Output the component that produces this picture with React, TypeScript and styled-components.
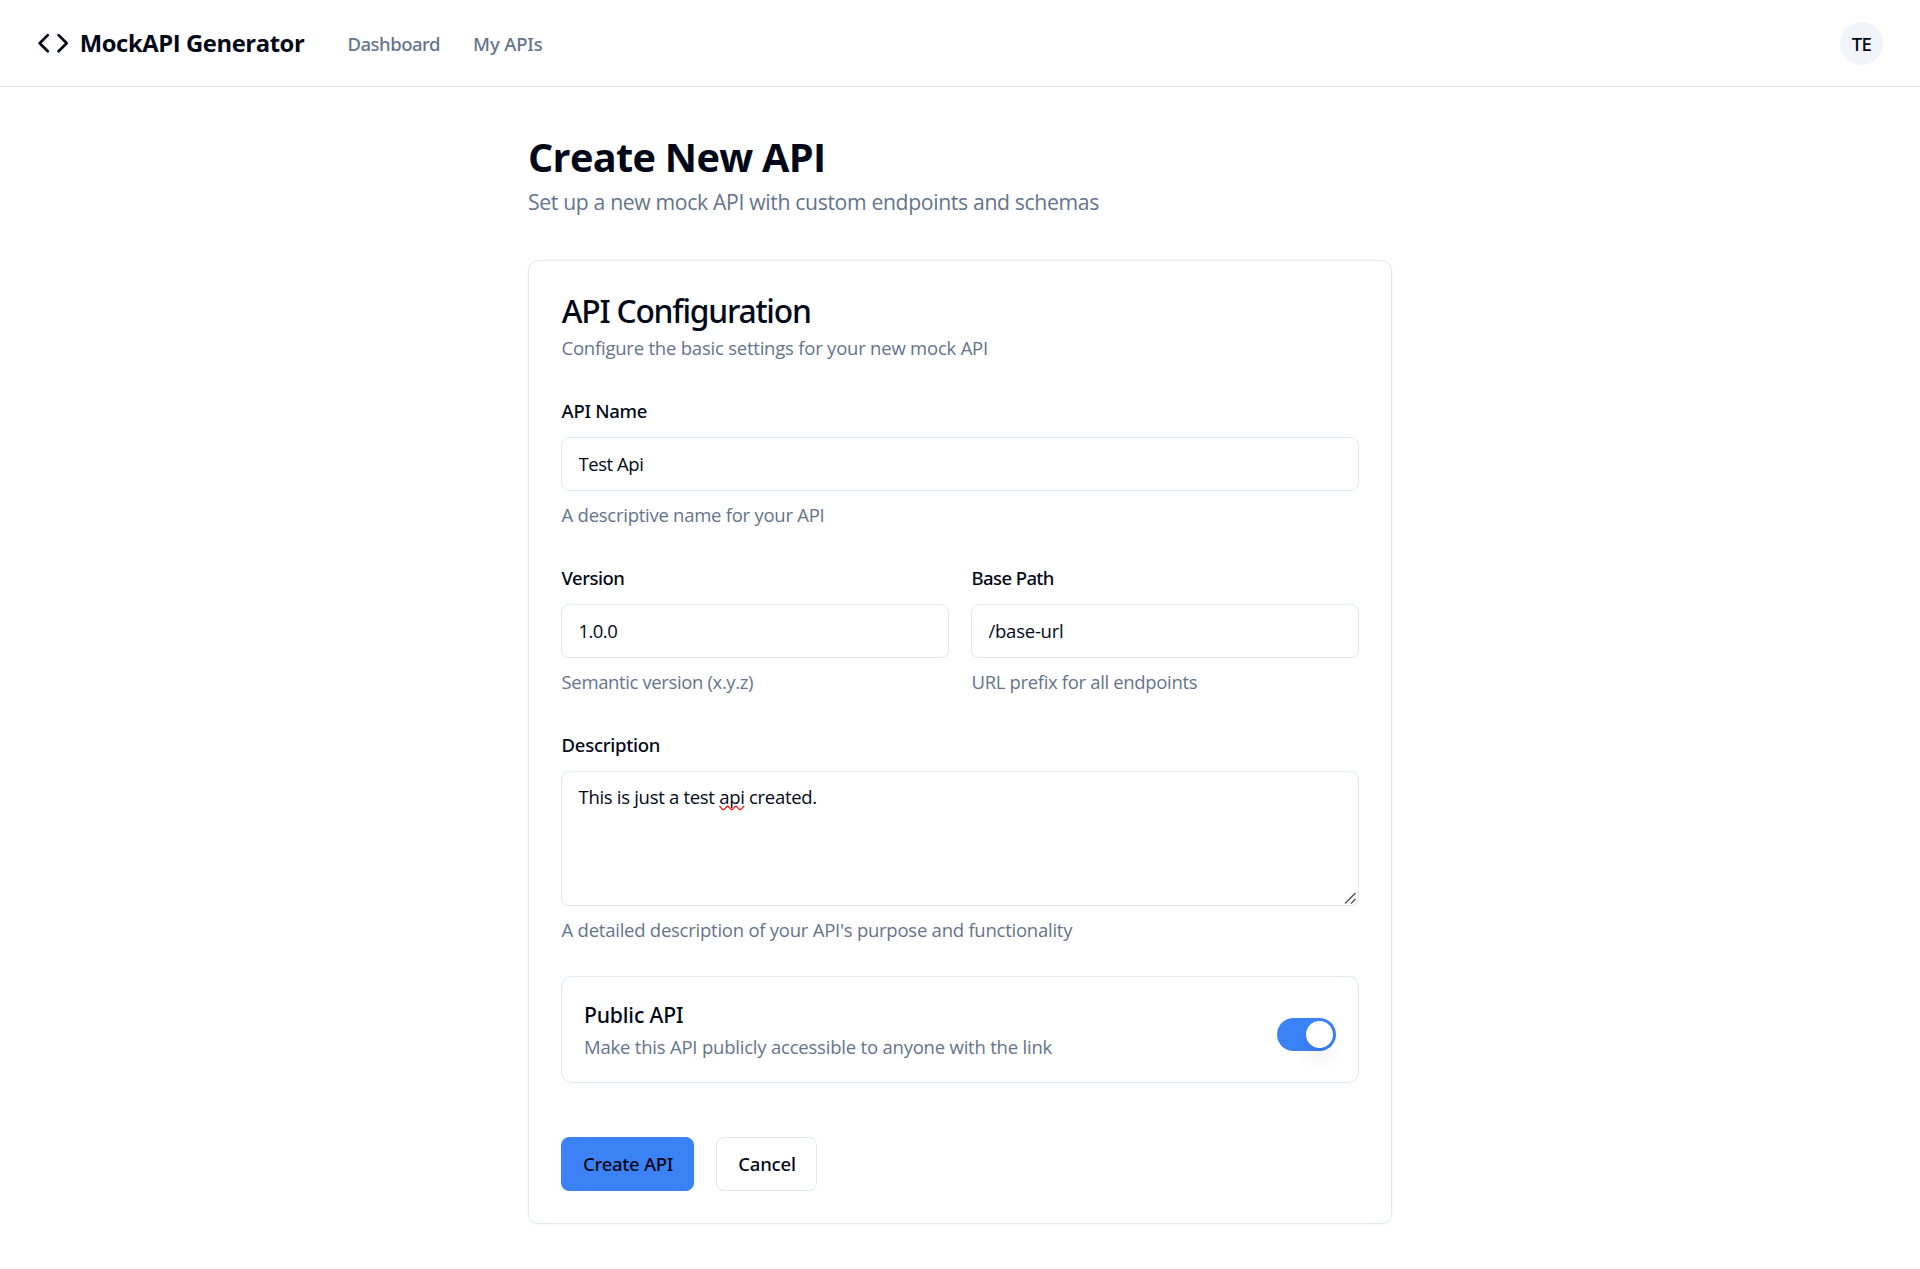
import React, { useState } from 'react';
import styled, { createGlobalStyle, css } from 'styled-components';

const color = {
  ink: '#020817',
  muted: '#64748b',
  border: '#e2e8f0',
  soft: '#f1f5f9',
  primary: '#3b82f6',
};

const regular = '"Open Sans", "Noto Sans", sans-serif';
const medium = '"Noto Sans", "Open Sans", sans-serif';

const GlobalStyle = createGlobalStyle`
  *, *::before, *::after { box-sizing: border-box; }
  body {
    margin: 0;
    background: #fff;
    color: ${color.ink};
    font-family: ${regular};
    font-size: 18.5px;
    line-height: 27px;
  }
  h1, h2, h3, p { margin: 0; }
`;

type Tracked = { $track?: number };
const tracking = css<Tracked>`letter-spacing: ${p => p.$track ?? 0}px;`;

const Page = styled.div`
  min-height: 1269px;
  background: #fff;
`;

const Header = styled.header`
  display: flex;
  align-items: center;
  height: 87px;
  padding: 0 37px 0 37.4px;
  border-bottom: 1px solid ${color.border};
`;

const Brand = styled.a`
  display: flex;
  align-items: center;
  gap: 10px;
  width: 310px;
  svg { flex: none; }
`;

const BrandName = styled.span<Tracked>`
  font-size: 23.8px;
  font-weight: 700;
  line-height: 38px;
  white-space: nowrap;
  ${tracking}
`;

const Nav = styled.nav`
  display: flex;
  gap: 33px;
  flex: 1;
  padding-top: 1px;
`;

const NavLink = styled.a<Tracked>`
  font-family: ${medium};
  font-weight: 500;
  color: ${color.muted};
  ${tracking}
`;

const Avatar = styled.div`
  display: flex;
  align-items: center;
  justify-content: center;
  width: 43px;
  height: 43px;
  padding-top: 1px;
  border-radius: 50%;
  background: ${color.soft};
  font-family: ${medium};
  font-weight: 500;
  letter-spacing: -0.5px;
`;

const Main = styled.main`
  width: 864px;
  margin: 0 auto;
  padding-top: 46px;
`;

const PageTitle = styled.h1`
  font-size: 39.7px;
  font-weight: 700;
  line-height: 49px;
  letter-spacing: -0.7px;
`;

const PageLead = styled.p`
  margin-top: 4px;
  font-size: 21.2px;
  line-height: 32px;
  letter-spacing: -0.35px;
  color: ${color.muted};
`;

const Card = styled.section`
  margin-top: 42px;
  padding: 34px 32px 32px;
  border: 1px solid ${color.border};
  border-radius: 10.8px;
  box-shadow: 0 1px 3px rgba(0, 0, 0, 0.05);
`;

const CardTitle = styled.h2`
  padding-left: 0.7px;
  font-family: ${medium};
  font-size: 31.75px;
  font-weight: 500;
  line-height: 32px;
  letter-spacing: -1.22px;
`;

const CardLead = styled.p`
  margin-top: 7px;
  padding-left: 0.5px;
  color: ${color.muted};
  letter-spacing: -0.22px;
`;

const Form = styled.form`
  display: flex;
  flex-direction: column;
  gap: 39.7px;
  margin-top: 40.2px;
`;

const Columns = styled.div`
  display: grid;
  grid-template-columns: 1fr 1fr;
  gap: 22px;
`;

const FieldBox = styled.div`
  display: flex;
  flex-direction: column;
  min-width: 0;
`;

const Label = styled.label<Tracked>`
  margin-bottom: 16.6px;
  padding-left: 0.6px;
  font-family: ${medium};
  font-weight: 500;
  line-height: 19px;
  ${tracking}
`;

const controlFrame = css`
  border: 1px solid ${color.border};
  border-radius: 8px;
  background: #fff;
  color: ${color.ink};
  font-family: ${regular};
  font-size: 18.5px;
  line-height: 27px;
  outline: none;
`;

const Input = styled.input<Tracked>`
  ${controlFrame}
  width: 100%;
  height: 54px;
  padding: 0 16.5px 1px;
  ${tracking}
`;

const TextArea = styled.div`
  ${controlFrame}
  position: relative;
  height: 135px;
  padding: 10.6px 16.5px;
  letter-spacing: -0.3px;
`;

const Misspelled = styled.span`
  position: relative;
  svg { position: absolute; left: 0; bottom: -2px; }
`;

const ResizeGrip = styled.svg`
  position: absolute;
  right: 1px;
  bottom: 0;
`;

const Help = styled.p<Tracked>`
  margin: 10.2px 0 0.6px;
  padding-left: 0.6px;
  color: ${color.muted};
  ${tracking}
`;

const TogglePanel = styled.div`
  display: flex;
  align-items: center;
  justify-content: space-between;
  height: 107px;
  margin-top: -6.9px;
  padding: 0 22px;
  border: 1px solid ${color.border};
  border-radius: 10.8px;
`;

const ToggleText = styled.div`
  padding-bottom: 1px;
`;

const ToggleTitle = styled.h3`
  font-family: ${medium};
  font-size: 21.2px;
  font-weight: 500;
  line-height: 32px;
  letter-spacing: -0.18px;
`;

const ToggleLead = styled.p`
  margin-top: 2px;
  color: ${color.muted};
  letter-spacing: -0.21px;
`;

const Switch = styled.button<{ $on: boolean }>`
  display: flex;
  align-items: center;
  justify-content: ${p => (p.$on ? 'flex-end' : 'flex-start')};
  width: 59px;
  height: 33px;
  margin-top: 9px;
  padding: 0 3px;
  border: 0;
  border-radius: 17px;
  background: ${p => (p.$on ? color.primary : color.border)};
`;

const Knob = styled.span`
  width: 27px;
  height: 27px;
  border-radius: 50%;
  background: #fff;
  box-shadow: 0 13px 20px -4px rgba(0, 0, 0, 0.1), 0 5px 8px -5px rgba(0, 0, 0, 0.1);
`;

const Actions = styled.div`
  display: flex;
  gap: 22px;
  margin-top: 14.3px;
`;

const Button = styled.button<Tracked & { $primary?: boolean; $width: number }>`
  width: ${p => p.$width}px;
  height: 54px;
  padding: 0 0 1px 1px;
  border: 1px solid ${p => (p.$primary ? color.primary : color.border)};
  border-radius: 8px;
  background: ${p => (p.$primary ? color.primary : '#fff')};
  color: ${color.ink};
  font-family: ${medium};
  font-size: 18.5px;
  font-weight: 500;
  line-height: 27px;
  ${tracking}
`;

type FieldProps = {
  label: string;
  help: string;
  labelTrack: number;
  helpTrack: number;
  children: React.ReactNode;
};

function Field({ label, help, labelTrack, helpTrack, children }: FieldProps) {
  return (
    <FieldBox>
      <Label $track={labelTrack}>{label}</Label>
      {children}
      <Help $track={helpTrack}>{help}</Help>
    </FieldBox>
  );
}

function CodeIcon() {
  return (
    <svg width="32.4" height="32.4" viewBox="0 0 24 24" fill="none" stroke="currentColor" strokeWidth="2" strokeLinecap="round" strokeLinejoin="round">
      <polyline points="16 18 22 12 16 6" />
      <polyline points="8 6 2 12 8 18" />
    </svg>
  );
}

export default function App() {
  const [isPublic, setIsPublic] = useState(true);

  return (
    <Page>
      <GlobalStyle />
      <Header>
        <Brand>
          <CodeIcon />
          <BrandName $track={-0.42}>MockAPI Generator</BrandName>
        </Brand>
        <Nav>
          <NavLink $track={-0.48}>Dashboard</NavLink>
          <NavLink $track={-0.15}>My APIs</NavLink>
        </Nav>
        <Avatar>TE</Avatar>
      </Header>

      <Main>
        <PageTitle>Create New API</PageTitle>
        <PageLead>Set up a new mock API with custom endpoints and schemas</PageLead>

        <Card>
          <CardTitle>API Configuration</CardTitle>
          <CardLead>Configure the basic settings for your new mock API</CardLead>

          <Form onSubmit={e => e.preventDefault()}>
            <Field label="API Name" labelTrack={-0.3} help="A descriptive name for your API" helpTrack={-0.26}>
              <Input defaultValue="Test Api" $track={-0.44} />
            </Field>

            <Columns>
              <Field label="Version" labelTrack={-0.51} help="Semantic version (x.y.z)" helpTrack={-0.37}>
                <Input defaultValue="1.0.0" $track={-0.55} />
              </Field>
              <Field label="Base Path" labelTrack={-0.6} help="URL prefix for all endpoints" helpTrack={-0.34}>
                <Input defaultValue="/base-url" $track={-0.24} />
              </Field>
            </Columns>

            <Field label="Description" labelTrack={-0.28} help="A detailed description of your API's purpose and functionality" helpTrack={-0.245}>
              <TextArea>
                This is just a test{' '}
                <Misspelled>
                  api
                  <svg width="26" height="6" viewBox="0 0 26 6" fill="none" stroke="#f01818" strokeWidth="1.3" strokeLinejoin="round">
                    <path d="M0.5 1 L3.6 4.6 H4.8 L8.2 1.2 H9 L12.2 4.6 H13.2 L16.5 1.2 H17.3 L20.6 4.6 H21.6 L25.2 1" />
                  </svg>
                </Misspelled>{' '}
                created.
                <ResizeGrip width="13" height="13" viewBox="0 0 13 13" stroke="#555" strokeWidth="1.5">
                  <path d="M1 11.5 L11.5 1 M7 11.5 L11.5 7" />
                </ResizeGrip>
              </TextArea>
            </Field>

            <TogglePanel>
              <ToggleText>
                <ToggleTitle>Public API</ToggleTitle>
                <ToggleLead>Make this API publicly accessible to anyone with the link</ToggleLead>
              </ToggleText>
              <Switch type="button" role="switch" aria-checked={isPublic} $on={isPublic} onClick={() => setIsPublic(!isPublic)}>
                <Knob />
              </Switch>
            </TogglePanel>

            <Actions>
              <Button type="submit" $primary $width={133} $track={-0.3}>Create API</Button>
              <Button type="button" $width={101} $track={-0.2}>Cancel</Button>
            </Actions>
          </Form>
        </Card>
      </Main>
    </Page>
  );
}
